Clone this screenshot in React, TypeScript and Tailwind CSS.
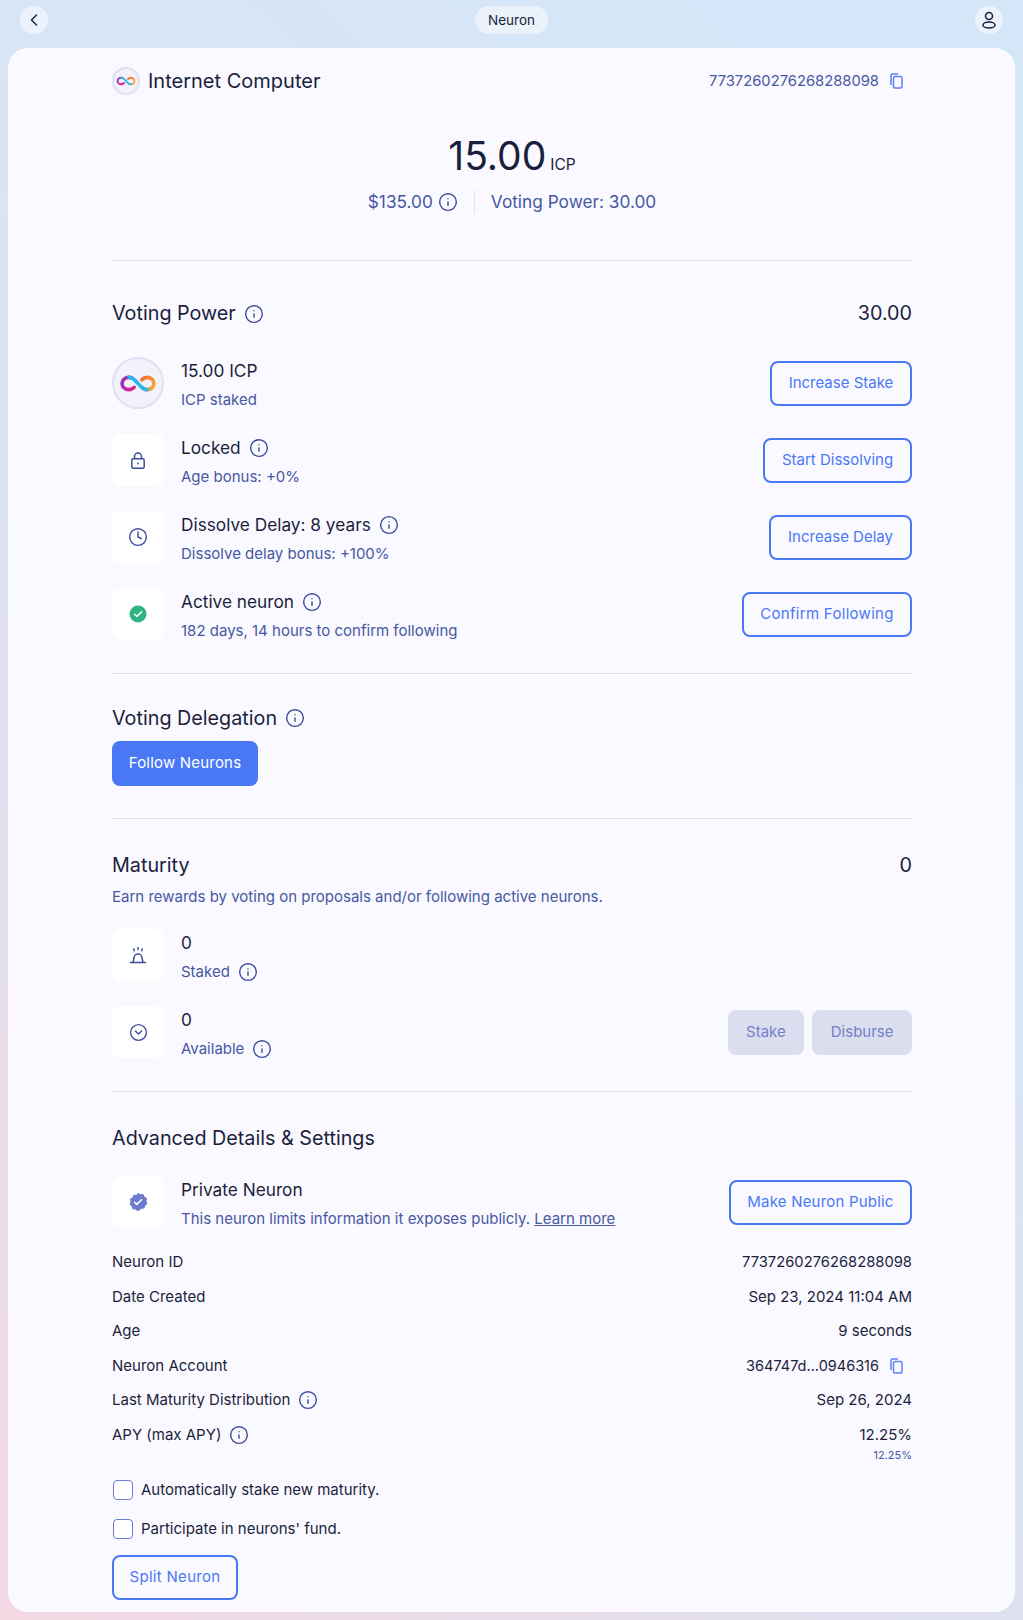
import { ReactNode } from 'react';
import { ChevronLeft, Info, Clock, CircleChevronDown } from 'lucide-react';

function IcpLogo({ size }: { size: number }) {
  const id = `icp${size}`;
  return (
    <svg width={size} height={size / 2} viewBox="0 0 40 20" fill="none">
      <defs>
        <linearGradient id={`${id}a`} x1="0" y1="4" x2="20" y2="16" gradientUnits="userSpaceOnUse">
          <stop offset="0" stopColor="#8a35c4" />
          <stop offset="1" stopColor="#f01f85" />
        </linearGradient>
        <linearGradient id={`${id}b`} x1="20" y1="4" x2="40" y2="16" gradientUnits="userSpaceOnUse">
          <stop offset="0" stopColor="#f5632a" />
          <stop offset="1" stopColor="#fbb03b" />
        </linearGradient>
      </defs>
      <path d="M16 14c-1.500 1.500-3.500 2.500-5.500 2.500C6.500 16.500 3.200 13.600 3.200 10s3.300-6.500 7.300-6.500c1 0 2 .1 3 .6" stroke={`url(#${id}a)`} strokeWidth="3.800" strokeLinecap="round" />
      <path d="M24 6c1.500-1.500 3.500-2.500 5.500-2.500 4 0 7.300 2.900 7.300 6.500s-3.300 6.500-7.300 6.500c-1 0-2-.1-3-.6" stroke={`url(#${id}b)`} strokeWidth="3.800" strokeLinecap="round" />
      <path d="M10.500 3.500C15 3.500 17.500 7.500 20 10c2.500 2.500 5 6.500 9.500 6.500" stroke="#2cb5ee" strokeWidth="3.800" strokeLinecap="round" />
    </svg>
  );
}

function InfoIcon() {
  return <Info className="h-5 w-5 text-[#3d4d99] shrink-0" strokeWidth={1.700} />;
}

function CopyIcon() {
  return (
    <svg width="13" height="16" viewBox="0 0 13 16" fill="none" stroke="#5b82f5" strokeWidth="1.500">
      <path d="M1 12V2.500A1.500 1.500 0 0 1 2.500 1H8" />
      <rect x="3.500" y="3.500" width="8.500" height="11.500" rx="1.500" />
    </svg>
  );
}

function LockIcon() {
  return (
    <svg width="14" height="17" viewBox="0 0 14 17" fill="none" stroke="#3d4d99" strokeWidth="1.500">
      <rect x=".8" y="6.800" width="12.400" height="9.400" rx="1.500" />
      <path d="M3.500 6.800V4.500a3.500 3.500 0 0 1 7 0v2.300" />
      <circle cx="7" cy="11.500" r=".9" fill="#3d4d99" stroke="none" />
    </svg>
  );
}

function BellIcon() {
  return (
    <svg width="18" height="18" viewBox="0 0 18 18" fill="none" stroke="#3d4d99" strokeWidth="1.500" strokeLinecap="round">
      <path d="M1.500 16.500h15" />
      <path d="M4 16.500l1-4.500a4 4 0 0 1 8 0l1 4.500" />
      <path d="M9 1.500v2M4.800 3l.5 1.800M13.200 3l-.5 1.800" />
    </svg>
  );
}

function GreenCheck() {
  return (
    <svg width="18" height="18" viewBox="0 0 18 18">
      <circle cx="9" cy="9" r="8.500" fill="#2fb383" />
      <path d="M5.500 9.300l2.400 2.200 4.600-4.600" fill="none" stroke="#fff" strokeWidth="1.500" strokeLinecap="round" strokeLinejoin="round" />
    </svg>
  );
}

function BadgeIcon() {
  return (
    <svg width="20" height="20" viewBox="0 0 20 20">
      <path d="M10 .8l2.500 1.500 2.900-.2 1.200 2.600 2.500 1.500-.6 2.800.9 2.800-2.200 1.900-.8 2.800-2.900.3L10 19.200l-2.500-1.700-2.900-.3-.8-2.800-2.200-1.900.9-2.800-.6-2.800 2.500-1.500 1.200-2.600 2.900.2z" fill="#6c7dd0" />
      <path d="M6.500 10.200l2.400 2.200 4.600-4.600" fill="none" stroke="#fff" strokeWidth="1.500" strokeLinecap="round" strokeLinejoin="round" />
    </svg>
  );
}

function OutlineButton({ className, children }: { className: string; children: ReactNode }) {
  return (
    <button className={`h-[45px] rounded-lg border-2 border-[#4a78f5] text-[#4a78f5] text-[15px] shrink-0 ${className}`}>
      {children}
    </button>
  );
}

function DisabledButton({ children }: { children: ReactNode }) {
  return <button className="h-[45px] px-[18.500px] rounded-lg bg-[#dadeef] text-[#7480c7] text-[15px]">{children}</button>;
}

function IconTile({ children }: { children: ReactNode }) {
  return <div className="h-[52px] w-[52px] rounded-lg bg-white flex items-center justify-center shrink-0">{children}</div>;
}

function LogoTile() {
  return (
    <div className="h-[52px] w-[52px] rounded-full bg-[#f3f1fa] border-2 border-[#dde1f1] flex items-center justify-center shrink-0">
      <IcpLogo size={38} />
    </div>
  );
}

function Row({ icon, title, sub, action }: { icon: ReactNode; title: ReactNode; sub: ReactNode; action?: ReactNode }) {
  return (
    <div className="flex items-center justify-between">
      <div className="flex items-center gap-[17px]">
        {icon}
        <div className="h-[52px] pt-[2px]">
          <div className="text-[17.25px] leading-[24px] text-[#1a1f3d] flex items-center gap-[8px]">{title}</div>
          <div className="text-[15px] leading-[24px] mt-[5px] text-[#4658a3] flex items-center gap-[8px]">{sub}</div>
        </div>
      </div>
      {action}
    </div>
  );
}

function Detail({ label, info, children }: { label: string; info?: boolean; children: ReactNode }) {
  return (
    <div className="flex justify-between items-start text-[15px] leading-[24px] text-[#1a1f3d] mb-[10.500px]">
      <div className="flex items-center gap-[8px]">
        {label}
        {info && <InfoIcon />}
      </div>
      <div className="flex flex-col items-end">{children}</div>
    </div>
  );
}

function Check({ label }: { label: string }) {
  return (
    <label className="flex items-center gap-[8px] text-[15px] leading-[24px] text-[#1a1f3d]">
      <span className="h-[20px] w-[20px] ml-[1px] rounded-[4px] border border-[#6c7dd0] bg-white" />
      {label}
    </label>
  );
}

export default function App() {
  return (
    <div className="min-h-screen px-2 pb-2 bg-[linear-gradient(225deg,#d3e7f9_0%,#d8e5f4_40%,#dfe0ee_65%,#f2d8e2_100%)] font-['Inter',sans-serif]">
      <header className="h-[48px] flex items-center justify-between px-[12px] pb-[8px]">
        <button className="h-[28px] w-[28px] rounded-full bg-[#ecf2fb] flex items-center justify-center">
          <ChevronLeft className="h-5 w-5 text-[#1a1f3d]" strokeWidth={1.700} />
        </button>
        <div className="h-[28px] px-[13px] rounded-full bg-[#ecf2fb] text-[13.500px] text-[#1a1f3d] flex items-center">Neuron</div>
        <button className="h-[28px] w-[28px] rounded-full bg-[#ecf2fb] flex items-center justify-center">
          <svg width="16" height="18" viewBox="0 0 16 18" fill="none" stroke="#1a1f3d" strokeWidth="1.500">
            <circle cx="8" cy="5" r="3.500" />
            <ellipse cx="8" cy="14" rx="6" ry="3" />
          </svg>
        </button>
      </header>

      <main className="rounded-[20px] bg-[#faf9ff] pt-[19px] pb-[12px] pl-[104px] pr-[103px]">
        <div className="flex items-center justify-between h-[28px]">
          <div className="flex items-center gap-[8px]">
            <div className="h-[28px] w-[28px] rounded-full bg-[#f3f1fa] border-2 border-[#dde1f1] flex items-center justify-center">
              <IcpLogo size={20} />
            </div>
            <span className="text-[20px] text-[#1a1f3d]">Internet Computer</span>
          </div>
          <div className="flex items-center gap-[11px] pr-[9px] text-[14.750px] text-[#4658a3]">
            7737260276268288098
            <CopyIcon />
          </div>
        </div>

        <div className="mt-[36px] flex justify-center items-baseline gap-[4px] text-[#1a1f3d]">
          <span className="text-[39px] leading-[50px]">15.00</span>
          <span className="text-[15.500px]">ICP</span>
        </div>
        <div className="mt-[9px] flex justify-center items-center text-[17.250px] leading-[24px] text-[#4658a3]">
          <span className="flex items-center gap-[5px] pr-[16px] border-r border-[#dde1f1]">
            $135.00
            <InfoIcon />
          </span>
          <span className="pl-[16px]">Voting Power: 30.00</span>
        </div>

        <hr className="mt-[46px] border-[#dee1f1]" />

        <section className="mt-[39px]">
          <div className="flex items-center justify-between h-[28px]">
            <h2 className="text-[19.750px] text-[#1a1f3d] flex items-center gap-[8px]">
              Voting Power
              <InfoIcon />
            </h2>
            <span className="text-[19.750px] text-[#1a1f3d]">30.00</span>
          </div>
          <div className="mt-[29px] flex flex-col gap-[25px]">
            <Row icon={<LogoTile />} title="15.00 ICP" sub="ICP staked" action={<OutlineButton className="w-[142px]">Increase Stake</OutlineButton>} />
            <Row icon={<IconTile><LockIcon /></IconTile>} title={<>Locked<InfoIcon /></>} sub="Age bonus: +0%" action={<OutlineButton className="w-[149px]">Start Dissolving</OutlineButton>} />
            <Row icon={<IconTile><Clock className="h-5 w-5 text-[#3d4d99]" strokeWidth={1.700} /></IconTile>} title={<>Dissolve Delay: 8 years<InfoIcon /></>} sub="Dissolve delay bonus: +100%" action={<OutlineButton className="w-[143px]">Increase Delay</OutlineButton>} />
            <Row icon={<IconTile><GreenCheck /></IconTile>} title={<>Active neuron<InfoIcon /></>} sub="182 days, 14 hours to confirm following" action={<OutlineButton className="w-[170px] tracking-[0.3px]">Confirm Following</OutlineButton>} />
          </div>
        </section>

        <hr className="mt-[33px] border-[#dee1f1]" />

        <section className="mt-[30px]">
          <h2 className="text-[19.750px] leading-[28px] text-[#1a1f3d] flex items-center gap-[8px]">
            Voting Delegation
            <InfoIcon />
          </h2>
          <button className="mt-[9px] h-[45px] w-[146px] rounded-lg bg-[#4a78f5] text-white text-[15px] tracking-[0.2px]">Follow Neurons</button>
        </section>

        <hr className="mt-[32px] border-[#dee1f1]" />

        <section className="mt-[33px]">
          <div className="flex items-center justify-between h-[28px] text-[19.750px] text-[#1a1f3d]">
            <h2>Maturity</h2>
            <span>0</span>
          </div>
          <p className="mt-[5px] text-[15px] leading-[24px] text-[#4658a3]">Earn rewards by voting on proposals and/or following active neurons.</p>
          <div className="mt-[20px] flex flex-col gap-[25px]">
            <Row icon={<IconTile><BellIcon /></IconTile>} title="0" sub={<>Staked<InfoIcon /></>} />
            <Row
              icon={<IconTile><CircleChevronDown className="h-[19px] w-[19px] text-[#3d4d99]" strokeWidth={1.700} /></IconTile>}
              title="0"
              sub={<>Available<InfoIcon /></>}
              action={
                <div className="flex gap-[8px]">
                  <DisabledButton>Stake</DisabledButton>
                  <DisabledButton>Disburse</DisabledButton>
                </div>
              }
            />
          </div>
        </section>

        <hr className="mt-[33px] border-[#dee1f1]" />

        <section className="mt-[32px]">
          <h2 className="text-[19.750px] leading-[28px] text-[#1a1f3d]">Advanced Details &amp; Settings</h2>
          <div className="mt-[24px]">
            <Row
              icon={<IconTile><BadgeIcon /></IconTile>}
              title="Private Neuron"
              sub={<span>This neuron limits information it exposes publicly. <span className="underline">Learn more</span></span>}
              action={<OutlineButton className="w-[183px] tracking-[0.2px]">Make Neuron Public</OutlineButton>}
            />
          </div>
          <div className="mt-[22px]">
            <Detail label="Neuron ID"><span className="text-[14.750px]">7737260276268288098</span></Detail>
            <Detail label="Date Created">Sep 23, 2024 11:04 AM</Detail>
            <Detail label="Age">9 seconds</Detail>
            <Detail label="Neuron Account">
              <span className="flex items-center gap-[11px] pr-[9px] text-[14.500px]">
                364747d...0946316
                <CopyIcon />
              </span>
            </Detail>
            <Detail label="Last Maturity Distribution" info>Sep 26, 2024</Detail>
            <Detail label="APY (max APY)" info>
              12.25%
              <span className="text-[11px] leading-[16px] text-[#4658a3]">12.25%</span>
            </Detail>
          </div>
          <div className="mt-[15px] flex flex-col gap-[15px]">
            <Check label="Automatically stake new maturity." />
            <Check label="Participate in neurons' fund." />
          </div>
          <div className="mt-[14px]">
            <OutlineButton className="w-[126px] tracking-[0.3px]">Split Neuron</OutlineButton>
          </div>
        </section>
      </main>
    </div>
  );
}
